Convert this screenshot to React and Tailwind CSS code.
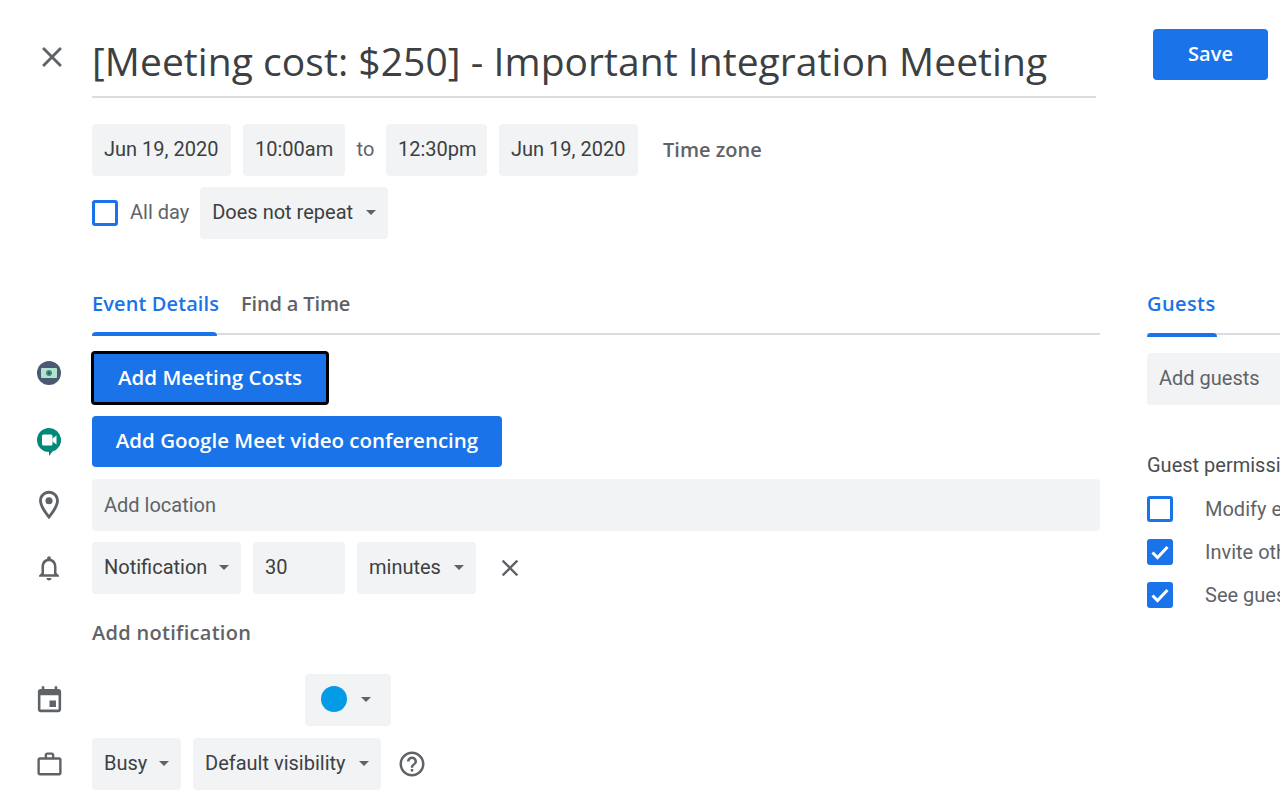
const roboto = 'font-["Roboto",sans-serif]';

function Icon({ d, className = '' }) {
  return (
    <svg viewBox="0 0 24 24" className={className} fill="currentColor">
      <path d={d} />
    </svg>
  );
}

function Caret({ className = 'ml-3' }) {
  return <span className={`h-0 w-0 border-x-[5px] border-t-[5px] border-x-transparent border-t-[#5f6368] ${className}`} />;
}

function Field({ children, caret, className = '' }) {
  return (
    <div className={`flex h-[52px] shrink-0 items-center rounded bg-[#f1f3f4] pb-[2px] pl-3 pr-3 text-[20px] text-[#3c4043] ${className}`}>
      {children}
      {caret && <Caret />}
    </div>
  );
}

function Checkbox({ checked }) {
  return checked ? (
    <span className="flex h-[26px] w-[26px] shrink-0 items-center justify-center rounded-[3px] bg-[#1a73e8]">
      <svg viewBox="0 0 24 24" className="h-6 w-6" fill="none" stroke="white" strokeWidth="3">
        <path d="M4.5 12.5l5 5 10-10.5" />
      </svg>
    </span>
  ) : (
    <span className="h-[26px] w-[26px] shrink-0 rounded-[3px] border-[3px] border-[#1a73e8]" />
  );
}

function Row({ icon, children, className = '' }) {
  return (
    <div className={`flex items-center ${className}`}>
      <div className="flex w-[92px] shrink-0 items-center justify-center pl-[6px] text-[#5f6368]">{icon}</div>
      {children}
    </div>
  );
}

function MoneyIcon() {
  return (
    <svg viewBox="0 0 24 24" className="mb-[10px] h-6 w-6">
      <circle cx="12" cy="12" r="12" fill="#4a5a73" />
      <rect x="4" y="7" width="16" height="10" rx="1" fill="#b5e2cf" />
      <circle cx="12" cy="12" r="3" fill="#3f8f7a" />
      <circle cx="12" cy="12" r="1.2" fill="#2b5f73" />
    </svg>
  );
}

function MeetIcon() {
  return (
    <svg viewBox="0 0 24 28" className="h-[28px] w-6">
      <path d="M12 0a12 12 0 0 1 3.5 23.5L12 28v-4a12 12 0 0 1 0-24z" fill="#00897b" />
      <rect x="5" y="6.5" width="10.5" height="11" rx="1.5" fill="white" />
      <path d="M15.5 10.5l4-3v9l-4-3z" fill="white" />
    </svg>
  );
}

export default function App() {
  return (
    <div className={`h-[800px] w-[1280px] overflow-hidden bg-white ${roboto}`}>
      <div className="flex h-[124px]">
        <div className="flex w-[92px] shrink-0 justify-center pl-[12px] pt-[40px] text-[#5f6368]">
          <Icon className="h-[34px] w-[34px]" d="M19 6.41L17.59 5 12 10.59 6.41 5 5 6.41 10.59 12 5 17.59 6.41 19 12 13.41 17.59 19 19 17.59 13.41 12z" />
        </div>
        <div className="h-[98px] w-[1004px] border-b-2 border-[#dadce0]">
          <h1 className="whitespace-nowrap pt-[37px] font-['Open_Sans',sans-serif] text-[39px] leading-[48px] tracking-[0.05px] text-[#3c4043]">
            [Meeting cost: $250] - Important Integration Meeting
          </h1>
        </div>
        <div className="ml-[57px] mt-[29px] flex h-[51px] w-[115px] items-center justify-center rounded bg-[#1a73e8] pb-[2px] font-['Open_Sans',sans-serif] text-[20px] font-semibold text-white">
          Save
        </div>
      </div>

      <div className="flex">
        <div className="w-[1100px] shrink-0">
          <div className="ml-[92px] flex items-center">
            <Field className="w-[139px]">Jun 19, 2020</Field>
            <Field className="ml-3 w-[102px]">10:00am</Field>
            <span className="w-[41px] pb-[2px] text-center text-[20px] text-[#5f6368]">to</span>
            <Field className="w-[101px]">12:30pm</Field>
            <Field className="ml-3 w-[139px]">Jun 19, 2020</Field>
            <span className="ml-[25px] font-['Open_Sans',sans-serif] text-[20px] font-[550] tracking-[0px] text-[#5f6368]">Time zone</span>
          </div>
          <div className="ml-[92px] mt-[11px] flex items-center">
            <Checkbox />
            <span className="ml-3 pb-[2px] text-[20px] text-[#5f6368]">All day</span>
            <Field caret className="ml-[11px] w-[188px] justify-between">Does not repeat</Field>
          </div>

          <div className="ml-[92px] mt-[47px] flex h-[49px] gap-6 border-b-2 border-[#dadce0] font-['Open_Sans',sans-serif] text-[20px] font-[550]">
            <div className="relative h-[49px] w-[125px] whitespace-nowrap pt-[3px] tracking-[0.1px] text-[#1a73e8]">
              Event Details
              <span className="absolute bottom-[-1px] left-0 h-1 w-full rounded-t bg-[#1a73e8]" />
            </div>
            <div className="pt-[3px] tracking-[-0.15px] text-[#5f6368]">Find a Time</div>
          </div>

          <Row icon={<MoneyIcon />} className="mt-[16px]">
            <div className="-ml-px flex h-[54px] w-[238px] items-center justify-center rounded border-[3px] border-black bg-[#1a73e8] pb-[2px] font-['Open_Sans',sans-serif] text-[20.5px] font-semibold text-white">
              Add Meeting Costs
            </div>
          </Row>
          <Row icon={<MeetIcon />} className="mt-[11px]">
            <div className="flex h-[51px] w-[410px] items-center justify-center rounded bg-[#1a73e8] pb-[2px] font-['Open_Sans',sans-serif] text-[20.5px] font-semibold text-white">
              Add Google Meet video conferencing
            </div>
          </Row>
          <Row
            className="mt-3"
            icon={
              <svg viewBox="0 0 24 24" className="h-[34px] w-[34px]" fill="currentColor">
                <path d="M12 2C8.13 2 5 5.13 5 9c0 5.25 7 13 7 13s7-7.75 7-13c0-3.87-3.13-7-7-7zM7 9c0-2.76 2.24-5 5-5s5 2.24 5 5c0 2.88-2.88 7.19-5 9.88C9.92 16.21 7 11.85 7 9z" />
                <circle cx="12" cy="9" r="2.5" />
              </svg>
            }
          >
            <Field className="w-[1008px] pt-[2px] text-[#5f6368]">Add location</Field>
          </Row>
          <Row
            className="mt-[11px]"
            icon={<Icon className="h-[30px] w-[30px]" d="M12 22c1.1 0 2-.9 2-2h-4c0 1.1.9 2 2 2zm6-6v-5c0-3.07-1.63-5.64-4.5-6.32V4c0-.83-.67-1.5-1.5-1.5s-1.5.67-1.5 1.5v.68C7.64 5.36 6 7.92 6 11v5l-2 2v1h16v-1l-2-2zm-2 1H8v-6c0-2.48 1.51-4.5 4-4.5s4 2.02 4 4.5v6z" />}
          >
            <Field caret className="w-[149px] justify-between">Notification</Field>
            <Field className="ml-3 w-[92px]">30</Field>
            <Field caret className="ml-3 w-[119px] justify-between">minutes</Field>
            <Icon className="ml-[20px] h-[28px] w-[28px] text-[#5f6368]" d="M19 6.41L17.59 5 12 10.59 6.41 5 5 6.41 10.59 12 5 17.59 6.41 19 12 13.41 17.59 19 19 17.59 13.41 12z" />
          </Row>
          <div className="ml-[92px] mt-[26px] font-['Open_Sans',sans-serif] text-[20px] font-[550] leading-[26px] tracking-[0.3px] text-[#5f6368]">
            Add notification
          </div>
          <Row
            className="mt-[28px]"
            icon={<Icon className="h-[31px] w-[31px]" d="M17 12h-5v5h5v-5zM16 1v2H8V1H6v2H5c-1.11 0-1.99.9-1.99 2L3 19c0 1.1.89 2 2 2h14c1.1 0 2-.9 2-2V5c0-1.1-.9-2-2-2h-1V1h-2zm3 18H5V8h14v11z" />}
          >
            <Field className="ml-[213px] w-[86px] pl-[16px]">
              <span className="h-[26px] w-[26px] rounded-full bg-[#039be5]" />
              <Caret className="ml-[14px]" />
            </Field>
          </Row>
          <Row
            className="mt-3"
            icon={<Icon className="h-[29px] w-[29px]" d="M20 6h-4V4c0-1.11-.89-2-2-2h-4c-1.11 0-2 .89-2 2v2H4c-1.11 0-1.99.89-1.99 2L2 19c0 1.11.89 2 2 2h16c1.11 0 2-.89 2-2V8c0-1.11-.89-2-2-2zm-6 0h-4V4h4v2zm6 13H4V8h16v11z" />}
          >
            <Field caret className="w-[89px] justify-between">Busy</Field>
            <Field caret className="ml-3 w-[188px] justify-between">Default visibility</Field>
            <Icon className="ml-[16px] h-[30px] w-[30px] text-[#5f6368]" d="M11 18h2v-2h-2v2zm1-16C6.48 2 2 6.48 2 12s4.48 10 10 10 10-4.48 10-10S17.52 2 12 2zm0 18c-4.41 0-8-3.59-8-8s3.59-8 8-8 8 3.59 8 8-3.59 8-8 8zm0-14c-2.21 0-4 1.79-4 4h2c0-1.1.9-2 2-2s2 .9 2 2c0 2-3 1.75-3 5h2c0-2.25 3-2.5 3-5 0-2.21-1.79-4-4-4z" />
          </Row>
        </div>

        <div className="ml-[47px] w-[400px] shrink-0">
          <div className="mt-[162px] h-[49px] border-b-2 border-[#dadce0] pt-[3px] font-['Open_Sans',sans-serif] text-[20px] font-[550] tracking-[0.4px] text-[#1a73e8]">
            <div className="relative h-[46px] w-[70px]">
              Guests
              <span className="absolute bottom-[-2px] left-0 h-1 w-full rounded-t bg-[#1a73e8]" />
            </div>
          </div>
          <Field className="mt-[18px] w-[300px] text-[#5f6368]">Add guests</Field>
          <div className="mt-[46px] text-[20px] leading-[28px] text-[#4a4d50]">Guest permissions</div>
          <div className="mt-[15px] flex flex-col gap-[13px] text-[20px] text-[#5f6368]">
            <div className="flex items-center gap-[32px]"><Checkbox /><span>Modify event</span></div>
            <div className="flex items-center gap-[32px]"><Checkbox checked /><span>Invite others</span></div>
            <div className="flex items-center gap-[32px]"><Checkbox checked /><span>See guest list</span></div>
          </div>
        </div>
      </div>
    </div>
  );
}
